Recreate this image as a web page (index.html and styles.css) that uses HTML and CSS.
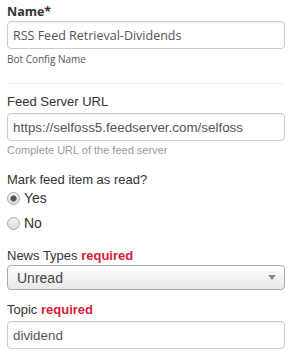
FILE: index.html
```html
<!DOCTYPE html>
<html lang="en">
<head>
    <meta charset="UTF-8">
    <meta name="viewport" content="width=device-width, initial-scale=1.0">
    <title>Bot Config</title>
    <link rel="stylesheet" href="styles.css">
</head>
<body>
    <div class="form">
        <div class="name-group">
            <label class="name-label">Name*</label>
            <input class="name-input" type="text" value="RSS Feed Retrieval-Dividends">
            <div class="name-help">Bot Config Name</div>
        </div>

        <hr class="divider">

        <div class="field">
            <label class="label">Feed Server URL</label>
            <input class="input" type="text" value="https://selfoss5.feedserver.com/selfoss">
            <div class="help">Complete URL of the feed server</div>
        </div>

        <div class="field radios">
            <label class="label">Mark feed item as read?</label>
            <label class="radio"><input type="radio" name="read" checked> Yes</label>
            <label class="radio"><input type="radio" name="read"> No</label>
        </div>

        <div class="field select-field">
            <label class="label">News Types <span class="req">required</span></label>
            <div class="select">
                <span>Unread</span>
                <span class="caret"></span>
            </div>
        </div>

        <div class="field">
            <label class="label">Topic <span class="req">required</span></label>
            <input class="input" type="text" value="dividend">
        </div>
    </div>
</body>
</html>
```

FILE: styles.css
```css
body {
    margin: 0;
    padding: 0 11px 0 7px;
    background: white;
    font-family: "Liberation Sans", Arial, sans-serif;
    color: #333;
}
.form {
    padding-top: 4px;
}
.name-label {
    display: block;
    font-family: "Open Sans", sans-serif;
    font-weight: bold;
    font-size: 12.5px;
    line-height: 16px;
    color: #333;
    margin-bottom: 1px;
}
.name-input {
    display: block;
    box-sizing: border-box;
    width: 100%;
    height: 28px;
    padding: 0 5px;
    border: 1px solid #ccc;
    border-radius: 4px;
    font-family: "Open Sans", sans-serif;
    font-size: 12.5px;
    color: #555;
    box-shadow: inset 0 1px 1px rgba(0,0,0,0.05);
}
.name-help {
    font-family: "Open Sans", sans-serif;
    font-size: 10px;
    line-height: 14px;
    color: #555;
    margin-top: 3px;
}
.divider {
    border: none;
    border-top: 1px solid #eee;
    margin: 17px 2px 10px 0;
}
.field {
    margin-bottom: 15px;
}
.label {
    display: block;
    font-size: 13px;
    line-height: 16px;
    color: #333;
    margin-bottom: 3px;
}
.req {
    color: #d81b3c;
    font-weight: bold;
}
.input {
    display: block;
    box-sizing: border-box;
    width: 100%;
    height: 28px;
    padding: 0 5px;
    border: 1px solid #ccc;
    border-radius: 4px;
    font-family: "Liberation Sans", Arial, sans-serif;
    font-size: 13.4px;
    color: #555;
    box-shadow: inset 0 1px 1px rgba(0,0,0,0.05);
}
.help {
    font-size: 11px;
    line-height: 13px;
    color: #999;
    margin-top: 3px;
}
.radios .label {
    margin-bottom: 0;
}
.radio {
    display: flex;
    align-items: center;
    font-size: 14px;
    height: 20px;
    margin-bottom: 5px;
    color: #333;
}
.radio:last-child {
    margin-bottom: 0;
}
.radio input {
    appearance: none;
    -webkit-appearance: none;
    box-sizing: border-box;
    margin: 0 4px 0 0;
    width: 13px;
    height: 13px;
    border: 1px solid #a9a9a9;
    border-radius: 50%;
    background: linear-gradient(#f4f4f4, #dcdcdc);
}
.radio input:checked {
    background: radial-gradient(circle, #555 0, #555 2.5px, #aaa 3.2px, transparent 3.6px), linear-gradient(#f4f4f4, #dcdcdc);
}
.field.select-field {
    margin-bottom: 12px;
}
.select {
    display: flex;
    align-items: center;
    justify-content: space-between;
    box-sizing: border-box;
    height: 25px;
    margin-top: -2px;
    padding: 0 8px 0 9px;
    border: 1px solid #aaa;
    border-radius: 4px;
    background: linear-gradient(#ffffff, #e8e8e8);
    font-size: 14px;
    color: #444;
}
.caret {
    width: 0;
    height: 0;
    border-left: 4px solid transparent;
    border-right: 4px solid transparent;
    border-top: 5px solid #888;
}
```
